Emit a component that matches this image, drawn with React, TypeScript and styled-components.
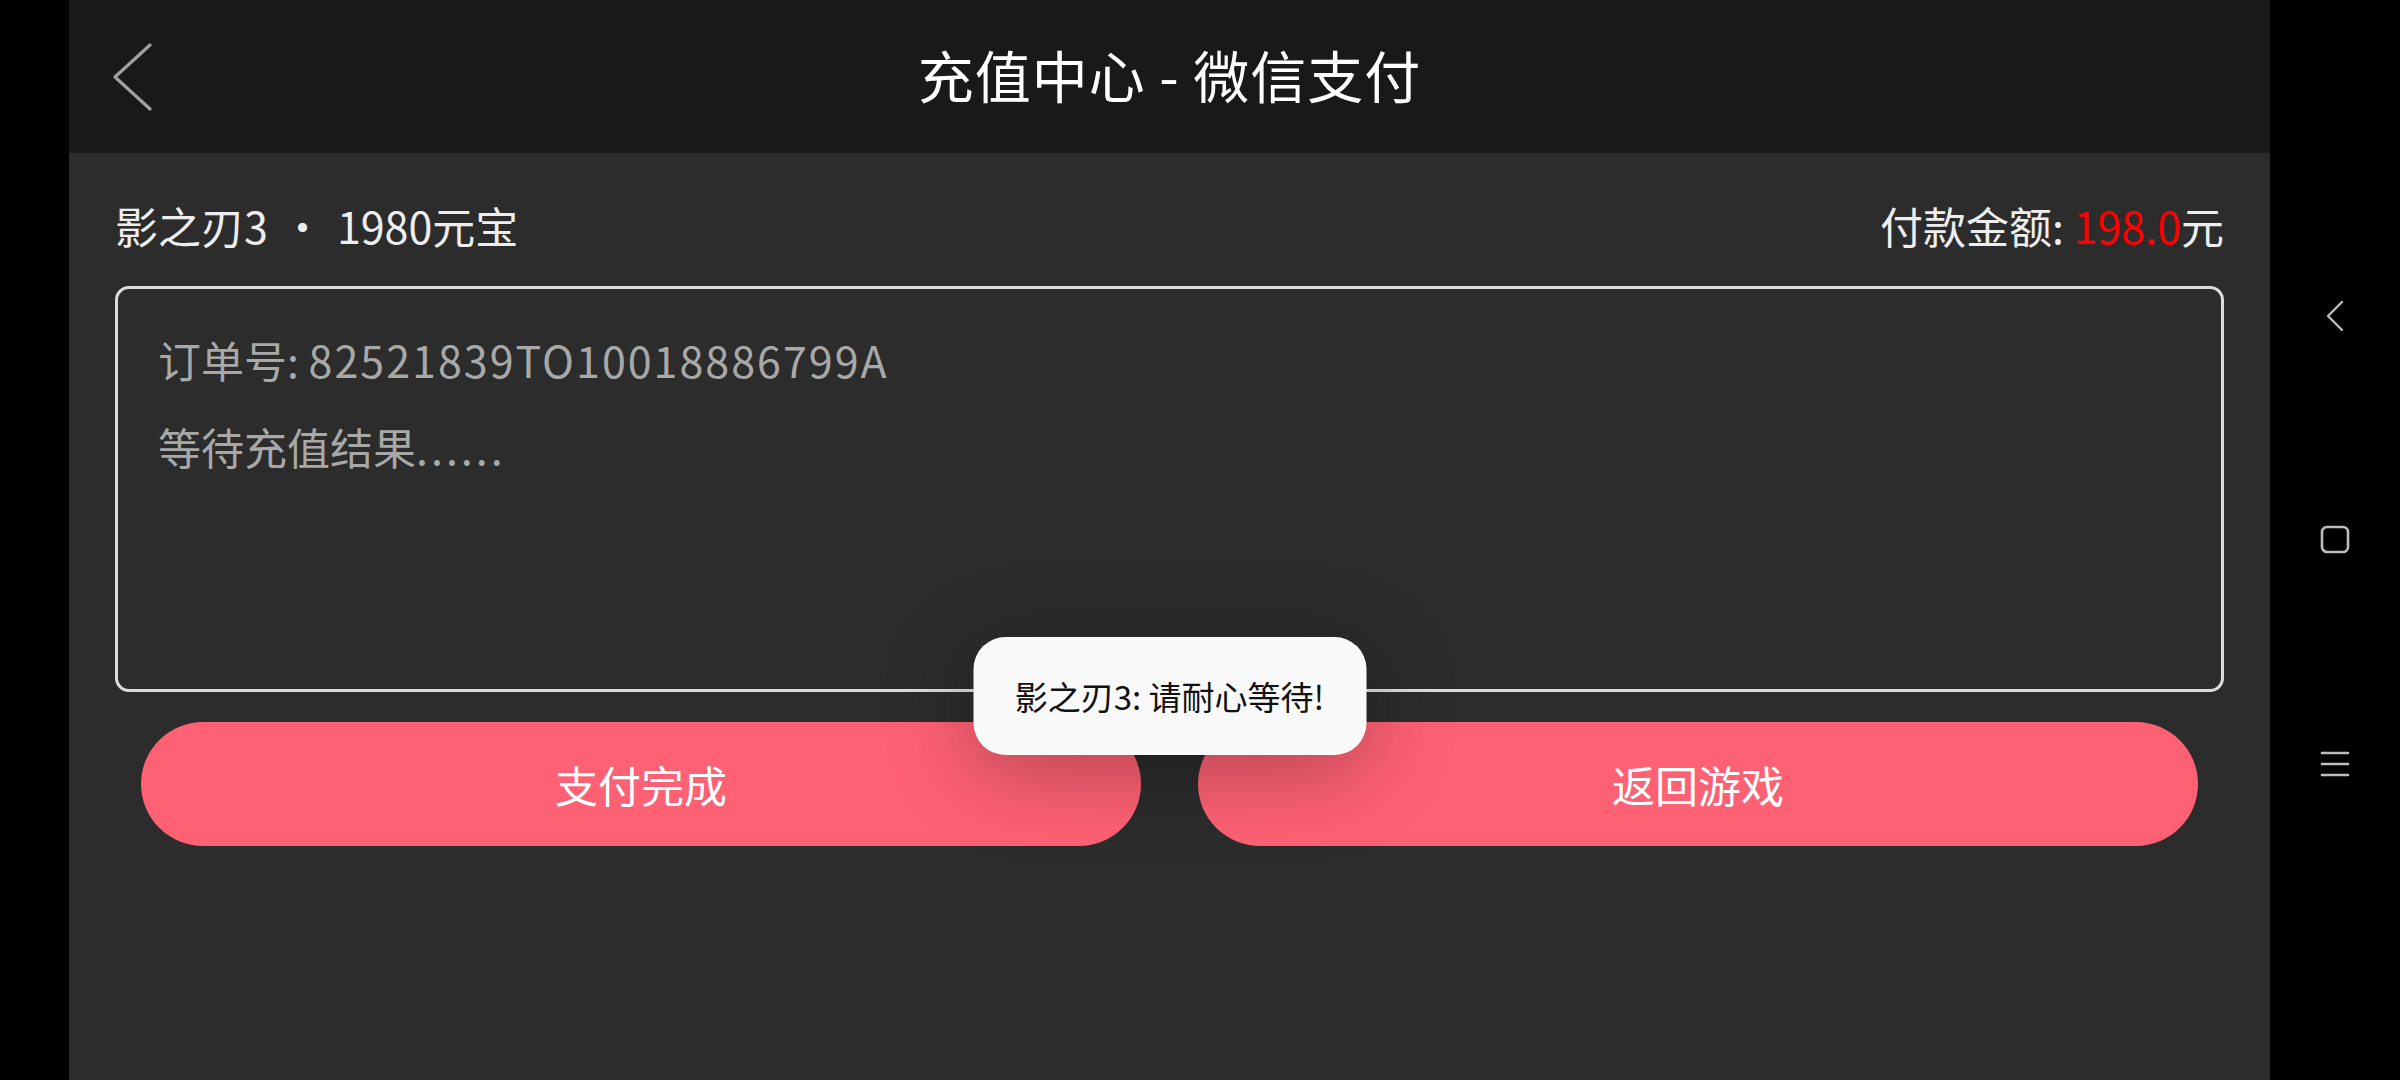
import React from "react";
import styled, { createGlobalStyle } from "styled-components";

const GlobalStyle = createGlobalStyle`
	html, body {
		margin: 0;
		padding: 0;
		background: #000;
	}
	body {
		font-family: "Noto Sans CJK SC", "Noto Sans", sans-serif;
	}
`;

const Screen = styled.div`
	display: flex;
	width: 2400px;
	height: 1080px;
	background: #000;
	overflow: hidden;
`;

const SideGap = styled.div`
	width: 69px;
	flex: 0 0 69px;
	background: #000;
`;

const Main = styled.div`
	position: relative;
	flex: 1 1 auto;
	display: flex;
	flex-direction: column;
	background: #2c2c2c;
`;

const Header = styled.header`
	height: 153px;
	display: grid;
	grid-template-columns: 1fr auto 1fr;
	align-items: center;
	background: #191919;
	padding: 0 44px 6px;
	box-sizing: border-box;

	h1 {
		margin: 0;
		font-size: 56px;
		font-weight: 400;
		color: #fff;
		letter-spacing: 1px;
	}
`;

const BackButton = styled.button`
	justify-self: start;
	display: flex;
	background: none;
	border: none;
	padding: 0;
	margin-top: 6px;
	cursor: pointer;
`;

const InfoRow = styled.div`
	display: flex;
	justify-content: space-between;
	align-items: center;
	margin: 42px 46px 0;
	height: 60px;
	font-size: 43px;
	color: #eeeeee;

	.dot {
		margin: 0 13px;
	}
	.price {
		color: #ff0000;
	}
`;

const OrderBox = styled.div`
	margin: 31px 46px 0;
	height: 406px;
	box-sizing: border-box;
	border: 3px solid #dcdcdc;
	border-radius: 14px;
	padding: 40px 40px 0;
	display: flex;
	flex-direction: column;
	gap: 27px;
`;

const OrderLine = styled.div`
	font-size: 43px;
	line-height: 60px;
	color: #a8a8a8;

	.code {
		letter-spacing: 2px;
	}
	.dots {
		letter-spacing: 3px;
	}
`;

const ButtonRow = styled.div`
	display: grid;
	grid-template-columns: 1fr 1fr;
	gap: 57px;
	margin: 30px 72px 0;
`;

const PinkButton = styled.button`
	height: 124px;
	border: none;
	border-radius: 62px;
	background: #fe6174;
	color: #fff;
	font-family: inherit;
	font-size: 43px;
	cursor: pointer;
`;

const Toast = styled.div`
	position: absolute;
	top: 637px;
	left: 50%;
	transform: translateX(-50%);
	width: 393px;
	height: 118px;
	box-sizing: border-box;
	display: flex;
	align-items: center;
	justify-content: center;
	background: #f9f9f9;
	border-radius: 32px;
	box-shadow: 0 16px 90px rgba(0, 0, 0, 0.3);
	font-size: 33px;
	color: #111;
	white-space: nowrap;
`;

const NavBar = styled.nav`
	width: 130px;
	flex: 0 0 130px;
	display: flex;
	flex-direction: column;
	align-items: center;
	padding-top: 296px;
	gap: 184px;
	box-sizing: border-box;
	background: #000;
`;

const NavIcon = styled.div`
	width: 40px;
	height: 40px;
	display: flex;
	align-items: center;
	justify-content: center;
`;

export default function App() {
	return (
		<>
			<GlobalStyle />
			<Screen>
				<SideGap />
				<Main>
					<Header>
						<BackButton aria-label="返回">
							<svg width="40" height="68" viewBox="0 0 40 68">
								<polyline
									points="37,2 2,34 37,66"
									fill="none"
									stroke="#a0a0a0"
									strokeWidth="3.2"
									strokeLinecap="round"
									strokeLinejoin="round"
								/>
							</svg>
						</BackButton>
						<h1>充值中心 - 微信支付</h1>
						<div />
					</Header>

					<InfoRow>
						<span>
							影之刃3<span className="dot">·</span>1980元宝
						</span>
						<span>
							付款金额: <span className="price">198.0</span>元
						</span>
					</InfoRow>

					<OrderBox>
						<OrderLine>
							订单号: <span className="code">82521839TO10018886799A</span>
						</OrderLine>
						<OrderLine>
							等待充值结果<span className="dots">......</span>
						</OrderLine>
					</OrderBox>

					<ButtonRow>
						<PinkButton>支付完成</PinkButton>
						<PinkButton>返回游戏</PinkButton>
					</ButtonRow>

					<Toast>影之刃3: 请耐心等待!</Toast>
				</Main>
				<NavBar>
					<NavIcon>
						<svg width="20" height="32" viewBox="0 0 20 32">
							<polyline
								points="17,2 3,16 17,30"
								fill="none"
								stroke="#bdbdbd"
								strokeWidth="2.4"
								strokeLinecap="round"
								strokeLinejoin="round"
							/>
						</svg>
					</NavIcon>
					<NavIcon>
						<svg width="30" height="30" viewBox="0 0 30 30">
							<rect
								x="2"
								y="2"
								width="26"
								height="25"
								rx="5"
								fill="none"
								stroke="#bdbdbd"
								strokeWidth="2.6"
							/>
						</svg>
					</NavIcon>
					<NavIcon>
						<svg width="30" height="26" viewBox="0 0 30 26">
							<g stroke="#bdbdbd" strokeWidth="2.6" strokeLinecap="round">
								<line x1="2" y1="2" x2="28" y2="2" />
								<line x1="2" y1="13" x2="28" y2="13" />
								<line x1="2" y1="24" x2="28" y2="24" />
							</g>
						</svg>
					</NavIcon>
				</NavBar>
			</Screen>
		</>
	);
}
